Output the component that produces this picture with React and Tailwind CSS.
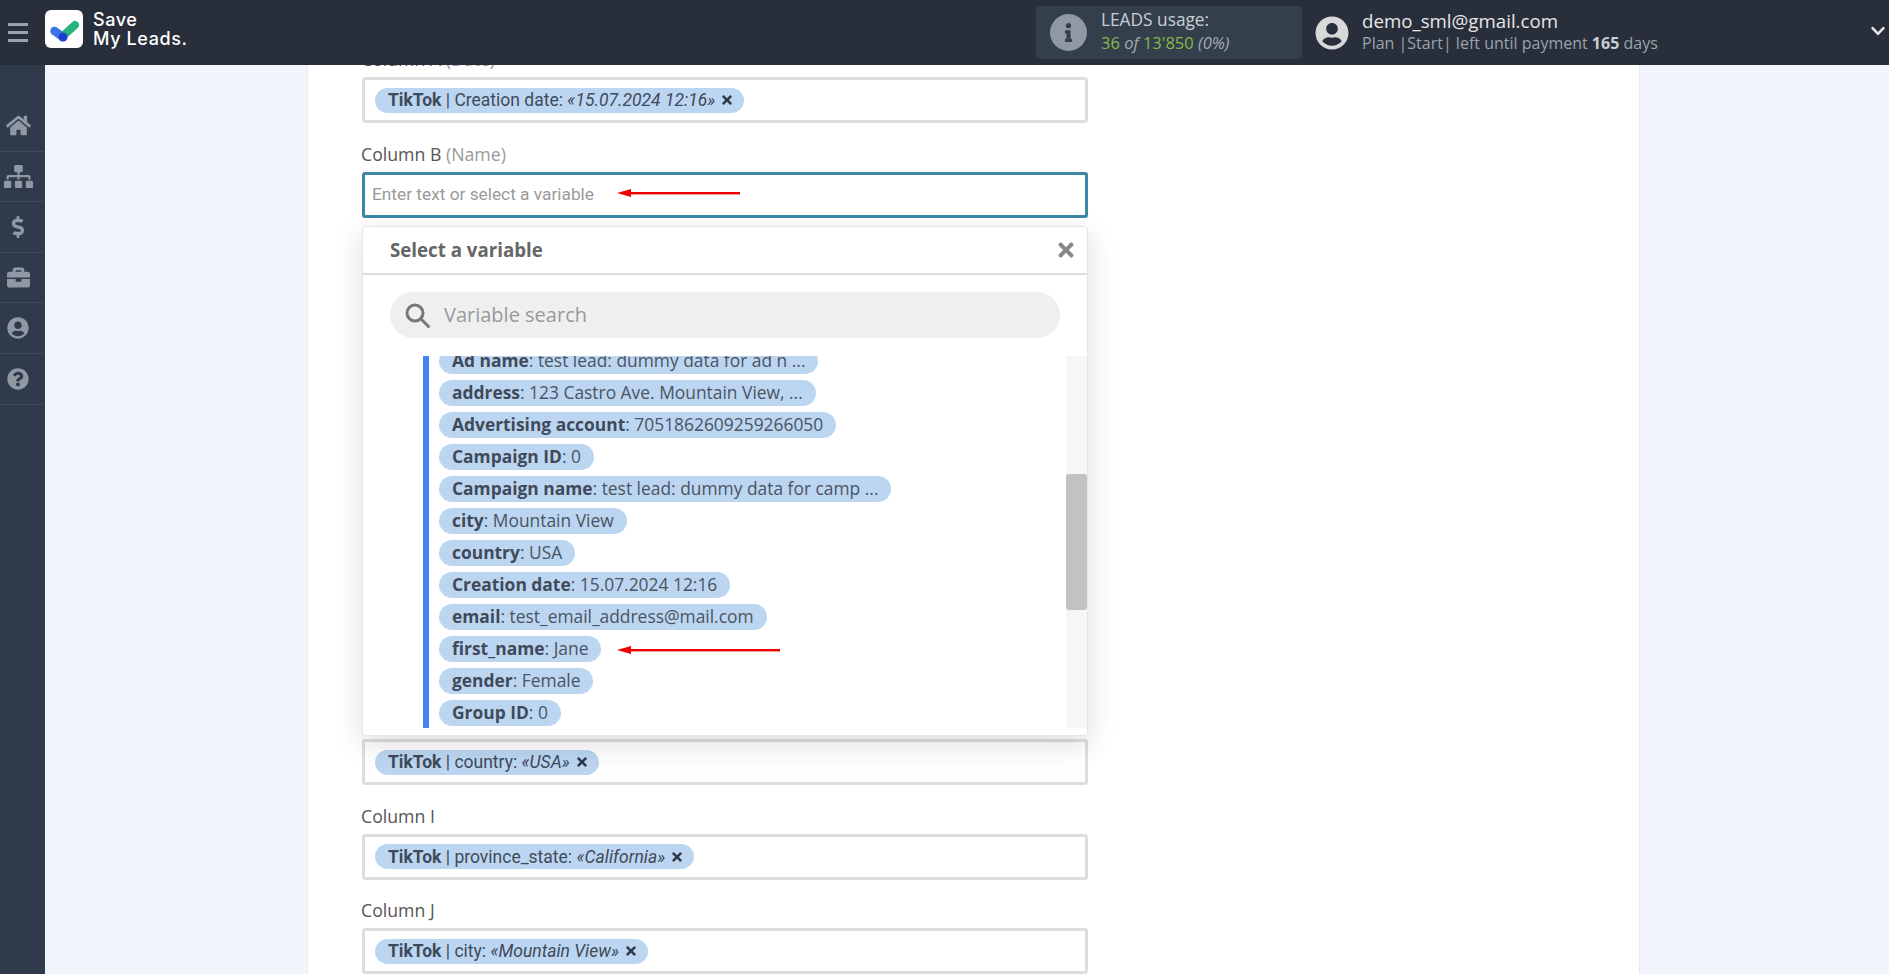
import React from 'react';
import { FaHome, FaSitemap, FaDollarSign, FaBriefcase, FaUserCircle, FaQuestionCircle, FaInfo, FaTimes, FaChevronDown } from 'react-icons/fa';

const navIcons = [
    { Icon: FaHome, size: 25 },
    { Icon: FaSitemap, size: 29 },
    { Icon: FaDollarSign, size: 22 },
    { Icon: FaBriefcase, size: 23 },
    { Icon: FaUserCircle, size: 22 },
    { Icon: FaQuestionCircle, size: 22 },
];

const variables = [
    ['address', '123 Castro Ave. Mountain View, ...'],
    ['Advertising account', '7051862609259266050'],
    ['Campaign ID', '0'],
    ['Campaign name', 'test lead: dummy data for camp ...'],
    ['city', 'Mountain View'],
    ['country', 'USA'],
    ['Creation date', '15.07.2024 12:16'],
    ['email', 'test_email_address@mail.com'],
    ['first_name', 'Jane'],
    ['gender', 'Female'],
    ['Group ID', '0'],
];

const Tag = ({ name, value }) => (
    <span className="inline-flex h-[25px] items-center gap-[5px] rounded-full bg-[#bcd6f1] pl-[13px] pr-[10px] font-['Roboto',sans-serif] text-[17.5px] text-[#3f4a5a]">
        <span><b className="font-bold">TikTok</b> | {name}: <i>«{value}»</i></span>
        <FaTimes className="text-[14px] text-[#2f3a4a]" />
    </span>
);

const Field = ({ label, hint, tag, focused, placeholder }) => (
    <div className="h-[94.55px] pt-[19px]">
        <div className="-ml-[1px] h-[30px] text-[17.7px] leading-[24px] text-[#555]">
            {label} {hint && <span className="text-[#999]">({hint})</span>}
        </div>
        <div className={`flex h-[46px] items-center rounded-[3px] border-[3px] bg-white px-[10px] ${focused ? 'border-[#3d86a8]' : 'border-[#dedede]'}`}>
            {tag}
            {placeholder && <span className="-ml-[3px] font-['Roboto',sans-serif] text-[17.3px] text-[#999]">{placeholder}</span>}
        </div>
    </div>
);

const RedArrow = ({ width, className }) => (
    <svg className={`absolute ${className}`} width={width} height="10" viewBox={`0 0 ${width} 10`}>
        <rect x="10" y="4" width={width - 10} height="2.4" fill="#f00000" />
        <path d="M0 5 L14 1 L14 9 Z" fill="#f00000" />
    </svg>
);

const Pill = ({ name, value }) => (
    <span className="inline-flex h-[26px] items-center rounded-full bg-[#bcd6f1] px-[13px] leading-none text-[#4a5462]">
        <span><b className="font-bold text-[#3f4a5a]">{name}</b>: {value}</span>
    </span>
);

function VariablePopup() {
    return (
        <div className="absolute left-[54px] top-[161px] z-10 h-[510px] w-[726px] rounded-[4px] border border-[#e6e6e6] bg-white shadow-[0_8px_30px_rgba(0,0,0,0.14)]">
            <div className="flex h-[48px] items-center justify-between border-b-2 border-[#dcdcdc] pl-[27px] pr-[10px]">
                <span className="text-[18.7px] font-bold text-[#666]">Select a variable</span>
                <FaTimes className="text-[22px] text-[#888]" />
            </div>
            <div className="px-[27px] pt-[17px]">
                <div className="flex h-[46px] w-[670px] items-center gap-[14px] rounded-full bg-[#efefef] pl-[15px]">
                    <svg width="25" height="25" viewBox="0 0 25 25" fill="none" stroke="#777">
                        <circle cx="10" cy="10" r="8" strokeWidth="3" />
                        <path d="M16 16 L23.5 23.5" strokeWidth="3" strokeLinecap="round" />
                    </svg>
                    <span className="text-[20px] text-[#999]">Variable search</span>
                </div>
            </div>
            <div className="mt-[18px] flex h-[372px]">
                <div className="ml-[60px] mr-[10px] h-full w-[6px] shrink-0 bg-[#4285ee]" />
                <div className="relative flex-1 overflow-hidden">
                    <div className="-mt-[8px] flex flex-col items-start gap-[6px] pb-1 text-[17.4px]">
                        <Pill name="Ad name" value="test lead: dummy data for ad n ..." />
                        {variables.map(([name, value]) => <Pill key={name} name={name} value={value} />)}
                    </div>
                </div>
                <div className="h-full w-[21px] shrink-0 bg-[#f6f6f6] pt-[118px]">
                    <div className="h-[136px] rounded-[3px] bg-[#c2c2c2]" />
                </div>
            </div>
        </div>
    );
}

export default function App() {
    return (
        <div className="flex h-[974px] flex-col overflow-hidden bg-[#f3f5fc] font-['Open_Sans',sans-serif]">
            <header className="z-20 flex h-[65px] shrink-0 items-center bg-[#282f3b] pr-[3px]">
                <div className="flex w-[45px] flex-col items-start gap-[5px] pl-[8px]">
                    <span className="h-[3px] w-[20px] bg-[#9aa3ad]" />
                    <span className="h-[3px] w-[20px] bg-[#9aa3ad]" />
                    <span className="h-[3px] w-[20px] bg-[#9aa3ad]" />
                </div>
                <div className="-mt-[7px] h-[38px] w-[38px] rounded-[6px] bg-white">
                    <svg width="38" height="38" viewBox="0 0 38 38">
                        <path d="M9.5 21 L18 27" stroke="#3f72ea" strokeWidth="8.5" strokeLinecap="round" />
                        <path d="M19 25 L30 15" stroke="#25b47e" strokeWidth="8" strokeLinecap="round" />
                        <circle cx="18" cy="27" r="4.5" fill="#1d3fd0" />
                    </svg>
                </div>
                <div className="-mt-[7px] ml-[10px] font-['Inter',sans-serif] text-[18px] font-medium leading-[19px] tracking-[0.6px] text-white">
                    Save<br />My Leads.
                </div>
                <div className="ml-auto flex h-[53px] w-[266px] items-center rounded-[4px] bg-[#343f4c] pl-[14px]">
                    <div className="flex h-[37px] w-[37px] items-center justify-center rounded-full bg-[#8f98a3]">
                        <FaInfo className="text-[19px] text-[#343f4c]" />
                    </div>
                    <div className="-mt-[3px] ml-[14px] text-[17.3px] leading-[23px]">
                        <div className="text-[#c9ced4]">LEADS usage:</div>
                        <div className="text-[16.5px] text-[#86b84a]">36 <i className="text-[#a4abb3]">of </i>13'850 <i className="text-[#a4abb3]">(0%)</i></div>
                    </div>
                </div>
                <FaUserCircle className="ml-[13px] text-[34px] text-[#d8d8d8]" />
                <div className="-mt-[3px] ml-[13px] w-[508px]">
                    <div className="text-[18.7px] leading-[24px] text-[#e6e6e6]">demo_sml@gmail.com</div>
                    <div className="text-[16px] leading-[20px] text-[#9aa3ad]">Plan |Start| left until payment <b className="font-bold text-[#c9ced4]">165</b> days</div>
                </div>
                <FaChevronDown className="-mt-[4px] text-[16px] text-[#e6e6e6]" />
            </header>
            <div className="flex min-h-0 flex-1">
                <nav className="w-[45px] shrink-0 bg-[#2f3a4a] pt-[36px]">
                    {navIcons.map(({ Icon, size }, i) => (
                        <div key={i} className="flex h-[50.6px] items-center justify-center border-b border-[#404b5a] pr-[9px] text-[#8f98a3]">
                            <Icon size={size} />
                        </div>
                    ))}
                </nav>
                <main className="min-w-0 flex-1 overflow-hidden pl-[262px]">
                    <div className="relative flow-root h-full w-[1333px] border-x border-[#e8e9ee] bg-white pl-[54px]">
                        <div className="-mt-[36.6px] w-[726px]">
                            <Field label="Column A" hint="Date" tag={<Tag name="Creation date" value="15.07.2024 12:16" />} />
                            <Field label="Column B" hint="Name" focused placeholder="Enter text or select a variable" />
                            {/* C to G sit behind the variable popup */}
                            <Field />
                            <Field />
                            <Field />
                            <Field />
                            <Field />
                            <Field tag={<Tag name="country" value="USA" />} />
                            <Field label="Column I" tag={<Tag name="province_state" value="California" />} />
                            <Field label="Column J" tag={<Tag name="city" value="Mountain View" />} />
                        </div>
                        <VariablePopup />
                        <RedArrow width={123} className="left-[309px] top-[123px]" />
                        <RedArrow width={163} className="left-[309px] top-[580px] z-20" />
                    </div>
                </main>
            </div>
        </div>
    );
}
